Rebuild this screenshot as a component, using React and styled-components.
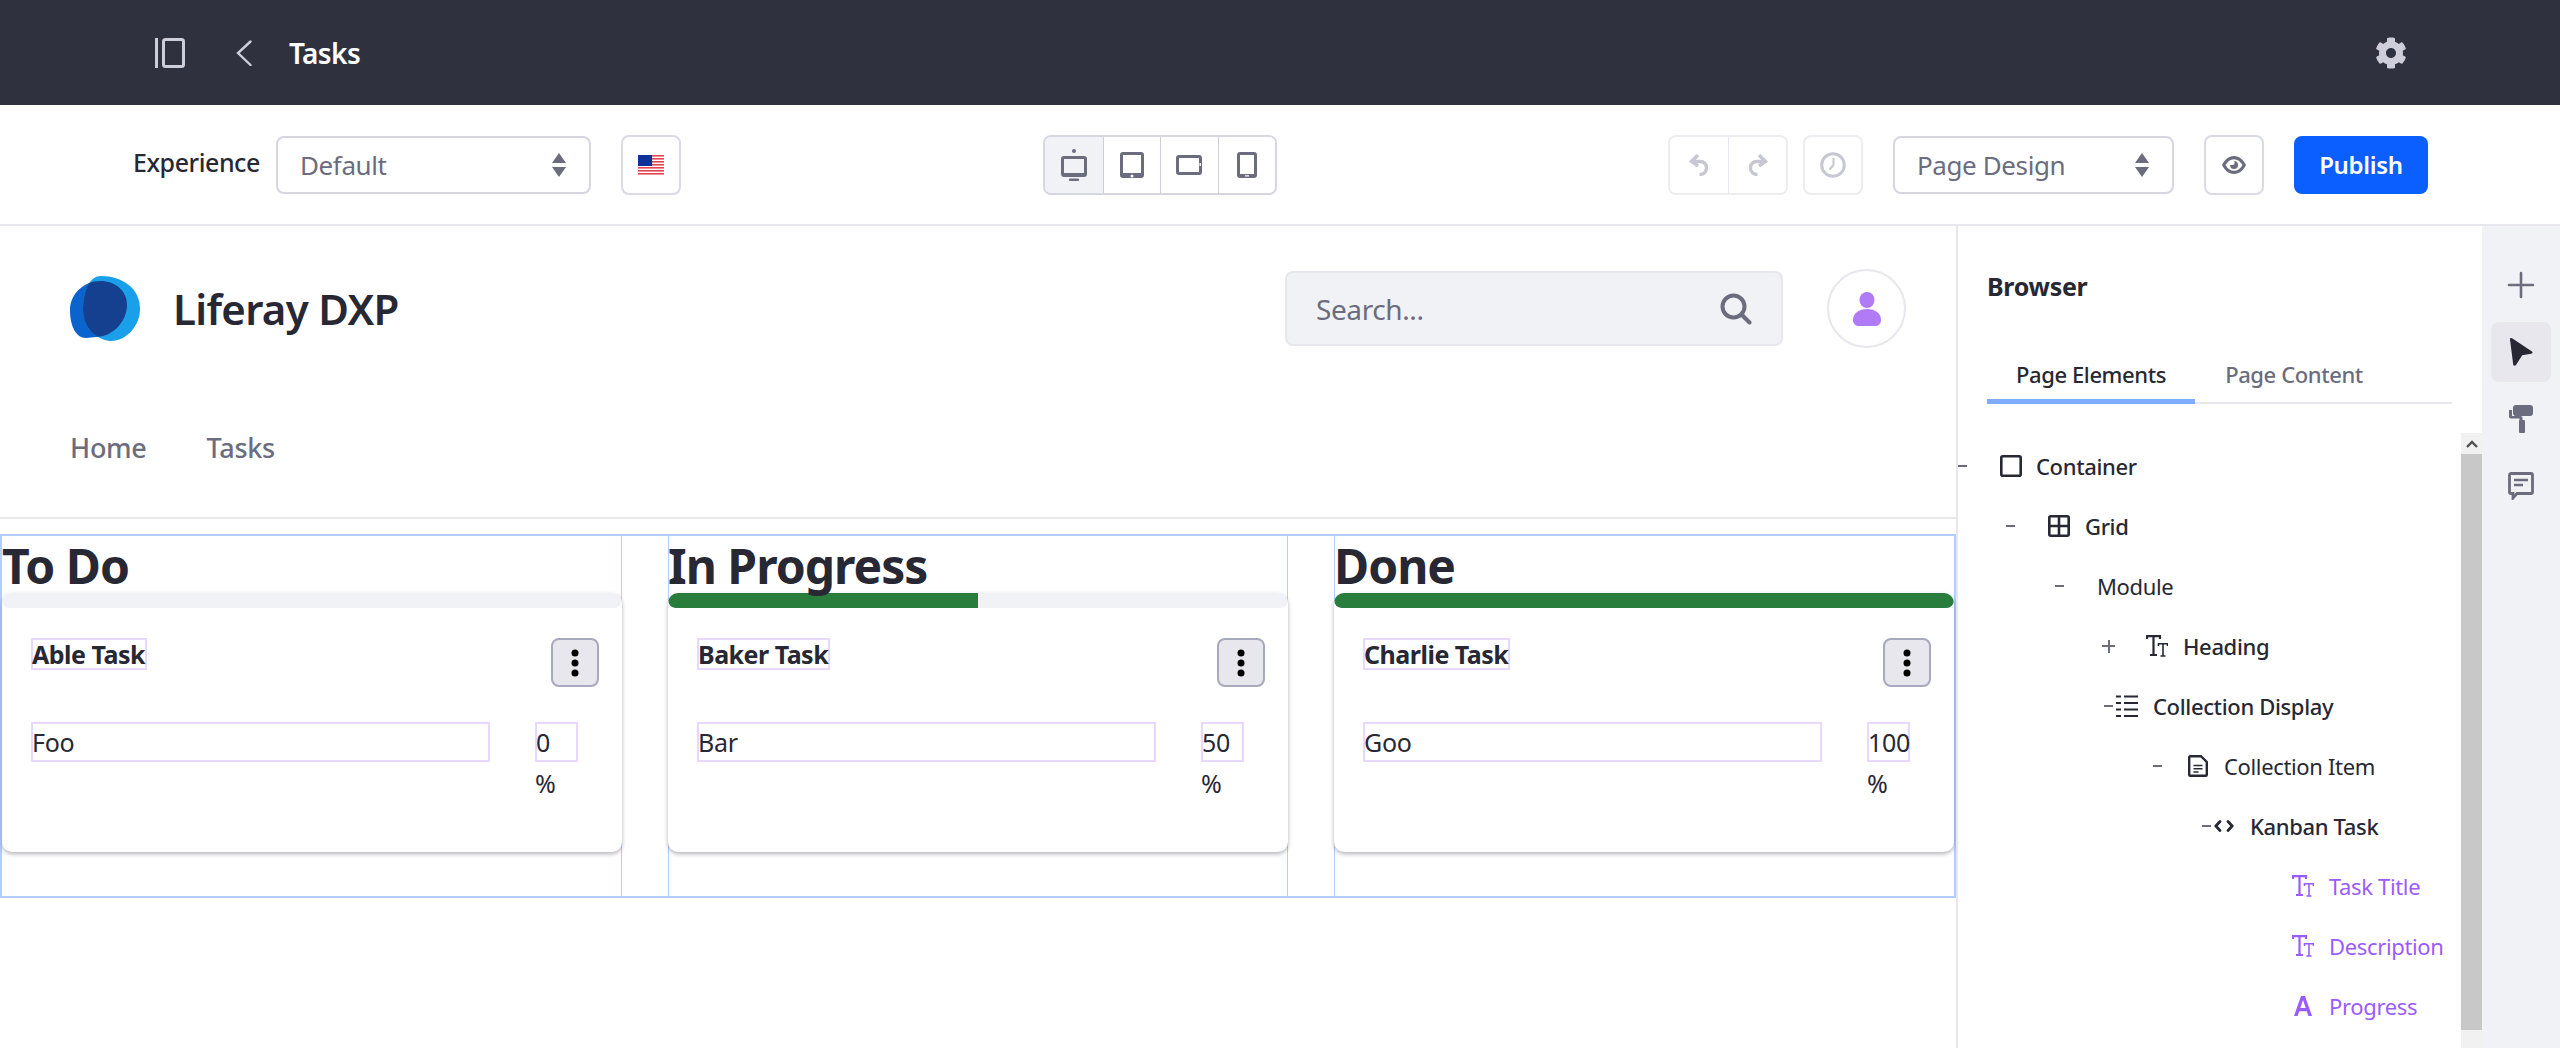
import React from "react";
import styled, { createGlobalStyle } from "styled-components";
import { FaCog } from "react-icons/fa";

const GlobalStyle = createGlobalStyle`
  html, body {
    margin: 0;
    background: #fff;
    overflow: hidden;
  }
  * { box-sizing: border-box; }
  body {
    font-family: "Noto Sans", "Open Sans", sans-serif;
    color: #272833;
  }
`;

const Page = styled.div`
  width: 2560px;
  height: 1048px;
  display: flex;
  flex-direction: column;
  overflow: hidden;
`;

const TopBar = styled.header`
  height: 105px;
  background: #30313f;
  display: flex;
  align-items: center;
  padding: 0 155px;
  color: #cdced9;
`;

const BackIcon = styled.svg`
  margin-left: 51px;
`;

const PageName = styled.div`
  margin-left: 37px;
  color: #fff;
  font-size: 28px;
  font-weight: 600;
  letter-spacing: -0.6px;
`;

const Settings = styled.div`
  margin-left: auto;
  margin-right: -2px;
  display: flex;
`;

const Toolbar = styled.div`
  height: 121px;
  flex: none;
  border-bottom: 2px solid #e7e7ed;
  display: flex;
  align-items: center;
  padding: 0 132px 0 133px;
`;

const ExperienceLabel = styled.span`
  width: 143px;
  flex: none;
  font-size: 25px;
  font-weight: 500;
  letter-spacing: -0.45px;
  margin-top: -5px;
`;

const SelectBox = styled.div`
  width: ${(props) => props.$width}px;
  height: 58px;
  margin-left: ${(props) => props.$left || 0}px;
  border: 2px solid #d5d6e0;
  border-radius: 8px;
  display: flex;
  align-items: center;
  justify-content: space-between;
  padding: 0 22px 0 22px;
  font-size: 26px;
  color: #6b6c7e;
  letter-spacing: -0.4px;
`;

const SquareButton = styled.div`
  width: 60px;
  height: 60px;
  border: 2px solid ${(props) => (props.$disabled ? "#ececf1" : "#d9dae3")};
  border-radius: 8px;
  background: #fff;
  display: flex;
  align-items: center;
  justify-content: center;
  margin-left: ${(props) => props.$left || 0}px;
  color: ${(props) => (props.$disabled ? "#c6c7d0" : "#6b6c7e")};
`;

const ButtonGroup = styled.div`
  display: flex;
  height: 60px;
  border: 2px solid ${(props) => (props.$disabled ? "#ececf1" : "#d5d6e0")};
  border-radius: 8px;
  overflow: hidden;
  margin-left: ${(props) => props.$left || "0"};
  color: ${(props) => (props.$disabled ? "#c6c7d0" : "#6b6c7e")};
`;

const GroupItem = styled.div`
  width: ${(props) => (props.$disabled ? 58 : 57.5)}px;
  display: flex;
  align-items: center;
  justify-content: center;
  background: ${(props) => (props.$active ? "#f1f2f5" : "#fff")};
  &:not(:first-child) {
    border-left: 1px solid ${(props) => (props.$disabled ? "#e7e7ed" : "#cdced9")};
  }
`;

const PublishButton = styled.div`
  width: 134px;
  height: 58px;
  margin-left: 30px;
  border-radius: 8px;
  background: #0b5fff;
  color: #fff;
  display: flex;
  align-items: center;
  justify-content: center;
  font-size: 24px;
  font-weight: 600;
  letter-spacing: -0.3px;
`;

const Main = styled.div`
  flex: 1;
  display: flex;
  min-height: 0;
`;

const Canvas = styled.main`
  width: 1956px;
  flex: none;
`;

const SiteHeader = styled.div`
  height: 293px;
  border-bottom: 2px solid #e7e7ed;
  padding: 43px 50px 0 70px;
`;

const BrandRow = styled.div`
  display: flex;
  align-items: center;
`;

const BrandName = styled.div`
  margin-left: 32px;
  font-size: 42px;
  font-weight: 600;
  letter-spacing: -0.7px;
`;

const SearchBox = styled.div`
  margin-left: auto;
  width: 498px;
  height: 75px;
  background: #f1f2f5;
  border: 2px solid #e7e7ed;
  border-radius: 8px;
  display: flex;
  align-items: center;
  justify-content: space-between;
  padding: 0 29px 0 29px;
  font-size: 28px;
  color: #6b6c7e;
  letter-spacing: -0.4px;
`;

const Avatar = styled.div`
  margin-left: 44px;
  width: 79px;
  height: 79px;
  border: 2px solid #e7e7ed;
  border-radius: 50%;
  display: flex;
  align-items: center;
  justify-content: center;
`;

const NavRow = styled.nav`
  display: flex;
  gap: 60px;
  margin-top: 81px;
  font-size: 27px;
  font-weight: 500;
  color: #6b6c7e;
  letter-spacing: -0.3px;
`;

const BoardGrid = styled.div`
  margin-top: 15px;
  height: 364px;
  border: 2px solid #b3cdff;
  display: grid;
  grid-template-columns: repeat(3, 1fr);
  gap: 46px;
`;

const Column = styled.section`
  box-shadow: ${(props) =>
    props.$last
      ? "inset 1px 0 0 #b3cdff"
      : props.$first
      ? "inset -1px 0 0 #b3cdff"
      : "inset 1px 0 0 #b3cdff, inset -1px 0 0 #b3cdff"};
`;

const ColumnTitle = styled.h1`
  margin: 0;
  height: 57px;
  font-size: 48px;
  line-height: 60px;
  font-weight: 700;
  letter-spacing: -1px;
  white-space: nowrap;
`;

const Card = styled.div`
  background: #fff;
  border-radius: 10px;
  height: 259px;
  box-shadow: 0 2px 4px rgba(39, 40, 51, 0.35);
  overflow: hidden;
`;

const ProgressTrack = styled.div`
  height: 15px;
  background: #f1f2f5;
  border-radius: 8px;
  overflow: hidden;
`;

const ProgressFill = styled.div`
  height: 100%;
  background: #287d3c;
  border-radius: 8px 0 0 8px;
`;

const CardBody = styled.div`
  padding: 30px 23px 0 29px;
`;

const CardTop = styled.div`
  display: flex;
  justify-content: space-between;
  align-items: flex-start;
  height: 49px;
`;

const Editable = styled.div`
  border: 2px solid #e8d8ff;
  height: 40px;
  font-size: 25px;
  line-height: 37px;
  letter-spacing: -0.3px;
  text-indent: -1px;
  width: ${(props) => (props.$width ? `${props.$width}px` : "auto")};
`;

const TaskTitle = styled(Editable)`
  height: 32px;
  line-height: 28px;
  font-size: 25px;
  font-weight: 700;
  letter-spacing: -0.5px;
  white-space: nowrap;
`;

const KebabButton = styled.div`
  width: 48px;
  height: 49px;
  background: #e7e7ed;
  border: 2px solid #a7a9bc;
  border-radius: 8px;
  display: flex;
  align-items: center;
  justify-content: center;
`;

const CardRow = styled.div`
  margin-top: 35px;
  display: flex;
  justify-content: space-between;
  align-items: flex-start;
  padding-right: 21px;
`;

const PercentCell = styled.div`
  font-size: 25px;
  line-height: 36px;
`;

const PercentSign = styled.div`
  margin-top: 3px;
`;

const BrowserPanel = styled.aside`
  flex: 1;
  border-left: 2px solid #e7e7ed;
  display: flex;
  flex-direction: column;
  min-width: 0;
`;

const PanelTitle = styled.div`
  height: 120px;
  padding: 42px 0 0 29px;
  font-size: 25px;
  line-height: 36px;
  font-weight: 700;
  letter-spacing: -0.3px;
`;

const Tabs = styled.div`
  margin: 0 30px 0 29px;
  height: 58px;
  flex: none;
  border-bottom: 2px solid #e7e7ed;
  display: flex;
`;

const Tab = styled.div`
  width: ${(props) => props.$width}px;
  height: 58px;
  padding-top: 13px;
  text-align: center;
  font-size: 22px;
  line-height: 30px;
  letter-spacing: -0.4px;
  font-weight: 500;
  color: ${(props) => (props.$active ? "#272833" : "#6b6c7e")};
  border-bottom: ${(props) => (props.$active ? "5px solid #80acff" : "none")};
`;

const TreeArea = styled.div`
  flex: 1;
  margin-top: 29px;
  display: flex;
  min-height: 0;
`;

const TreeList = styled.ul`
  list-style: none;
  margin: 0;
  padding: 3px 0 0;
  flex: 1;
`;

const TreeRow = styled.li`
  height: 60px;
  display: flex;
  align-items: center;
  padding-left: ${(props) => props.$indent}px;
  font-size: 22px;
  letter-spacing: -0.35px;
  color: ${(props) => (props.$purple ? "#9a5cff" : "#272833")};
  font-weight: ${(props) => (props.$strong ? 500 : 400)};
  white-space: nowrap;
`;

const Toggle = styled.span`
  width: ${(props) => (props.$plus ? 13 : 9)}px;
  height: 2px;
  background: #6b6c7e;
  margin-right: ${(props) => props.$gap}px;
  flex: none;
  position: relative;
  &::after {
    content: "";
    display: ${(props) => (props.$plus ? "block" : "none")};
    position: absolute;
    left: 5.5px;
    top: -5.5px;
    width: 2px;
    height: 13px;
    background: #6b6c7e;
  }
`;

const TreeIcon = styled.svg`
  flex: none;
  margin-right: ${(props) => props.$gap}px;
`;

const Scrollbar = styled.div`
  width: 21px;
  flex: none;
  background: #f1f1f1;
  display: flex;
  flex-direction: column;
`;

const ScrollArrow = styled.div`
  height: 21px;
  display: flex;
  align-items: center;
  justify-content: center;
`;

const ScrollThumb = styled.div`
  height: 576px;
  background: #c8c8c8;
`;

const Rail = styled.div`
  width: 78px;
  flex: none;
  background: #f1f2f5;
  padding: 29px 9px 0;
  display: flex;
  flex-direction: column;
  gap: 7px;
`;

const RailButton = styled.div`
  height: 60px;
  border-radius: 8px;
  background: ${(props) => (props.$active ? "#e7e7ed" : "transparent")};
  color: ${(props) => (props.$active ? "#272833" : "#6b6c7e")};
  display: flex;
  align-items: center;
  justify-content: center;
`;

const Carets = () => (
  <svg width="16" height="24" viewBox="0 0 16 24" fill="#6b6c7e">
    <path d="M8 0l7 10H1zM8 24L1 14h14z" />
  </svg>
);

const SidebarIcon = () => (
  <svg width="30" height="30" viewBox="0 0 30 30" fill="none" stroke="currentColor" strokeWidth="3">
    <path d="M1.5 0v30" />
    <rect x="8.5" y="1.5" width="20" height="27" rx="2" />
  </svg>
);

const Flag = () => (
  <svg width="26" height="20" viewBox="0 0 26 20">
    <rect width="26" height="20" fill="#fff" />
    {[0, 3, 6, 9, 12, 15, 18].map((y) => (
      <rect key={y} y={y} width="26" height="1.6" fill="#e2474e" />
    ))}
    <rect width="14" height="11" fill="#0a3299" />
  </svg>
);

const DesktopIcon = () => (
  <svg width="26" height="32" viewBox="0 0 26 32" fill="currentColor">
    <circle cx="13" cy="2" r="2" />
    <path fillRule="evenodd" d="M3 7h20a3 3 0 0 1 3 3v15a3 3 0 0 1-3 3H3a3 3 0 0 1-3-3V10a3 3 0 0 1 3-3zm0 3v14h20V10z" />
    <rect x="8" y="29.5" width="10" height="2.5" rx="1" />
  </svg>
);

const TabletIcon = () => (
  <svg width="24" height="26" viewBox="0 0 24 26" fill="currentColor">
    <path fillRule="evenodd" d="M3 0h18a3 3 0 0 1 3 3v20a3 3 0 0 1-3 3H3a3 3 0 0 1-3-3V3a3 3 0 0 1 3-3zm0 3v18h18V3zm9 19.5a1.5 1.5 0 1 0 0 3 1.5 1.5 0 0 0 0-3z" />
  </svg>
);

const LandscapeIcon = () => (
  <svg width="26" height="20" viewBox="0 0 26 20" fill="currentColor">
    <path fillRule="evenodd" d="M3 0h20a3 3 0 0 1 3 3v14a3 3 0 0 1-3 3H3a3 3 0 0 1-3-3V3a3 3 0 0 1 3-3zm0 3v14h20V3zM23.5 8v3h1.5V8z" />
  </svg>
);

const PhoneIcon = () => (
  <svg width="20" height="26" viewBox="0 0 20 26" fill="currentColor">
    <path fillRule="evenodd" d="M3 0h14a3 3 0 0 1 3 3v20a3 3 0 0 1-3 3H3a3 3 0 0 1-3-3V3a3 3 0 0 1 3-3zm0 3v19h14V3zM8 23.2v1.3h4v-1.3z" />
  </svg>
);

const UndoIcon = () => (
  <svg width="20" height="22" viewBox="0 0 20 22" fill="none" stroke="currentColor" strokeWidth="3.4">
    <path d="M9 1L2.5 7.5 9 12" />
    <path d="M3 7.5h8c4 0 6.5 2.5 6.5 6.5s-3 6.5-7 6.5" />
  </svg>
);

const RedoIcon = () => (
  <svg width="20" height="22" viewBox="0 0 20 22" fill="none" stroke="currentColor" strokeWidth="3.4">
    <path d="M11 1l6.5 6.5L11 12" />
    <path d="M17 7.5H9c-4 0-6.5 2.5-6.5 6.5s3 6.5 7 6.5" />
  </svg>
);

const ClockIcon = () => (
  <svg width="26" height="26" viewBox="0 0 26 26" fill="none" stroke="currentColor">
    <circle cx="13" cy="13" r="11.3" strokeWidth="3" />
    <path d="M13.5 6v7L9.5 17.5" strokeWidth="2" />
  </svg>
);

const EyeIcon = () => (
  <svg width="24" height="18" viewBox="0 0 24 18" fill="currentColor">
    <path fillRule="evenodd" d="M12 0c5.5 0 9.6 4 12 9-2.4 5-6.5 9-12 9S2.4 14 0 9c2.400-5 6.500-9 12-9zm0 3.200C8.500 3.200 5.500 5.500 3.500 9c2 3.500 5 5.800 8.500 5.800s6.500-2.300 8.500-5.800c-2-3.500-5-5.800-8.500-5.800z" />
    <path fillRule="evenodd" d="M12 5a4 4 0 1 1-4 4h3.200A2.500 2.500 0 0 0 12 5z" />
  </svg>
);

const Logo = () => (
  <svg width="71" height="65" viewBox="0 0 71 65">
    <defs>
      <clipPath id="logo-left">
        <path d="M0 34C0 18 14 5 30 5c16 0 27 10 27 24 0 17-15 32-31 32l-10 1C6 62 0 50 0 34z" />
      </clipPath>
    </defs>
    <path d="M0 34C0 18 14 5 30 5c16 0 27 10 27 24 0 17-15 32-31 32l-10 1C6 62 0 50 0 34z" fill="#0b63ce" />
    <path d="M31 0c21 0 39 12 39 33 0 17-14 32-29 32-9 0-28-9-28-31C13 18 18 0 31 0z" fill="#1aa0e8" />
    <path
      d="M31 0c21 0 39 12 39 33 0 17-14 32-29 32-9 0-28-9-28-31C13 18 18 0 31 0z"
      fill="#15408f"
      clipPath="url(#logo-left)"
    />
  </svg>
);

const SearchIcon = () => (
  <svg width="32" height="32" viewBox="0 0 32 32" fill="none" stroke="#6b6c7e" strokeWidth="4" strokeLinecap="round">
    <circle cx="13.500" cy="13.500" r="11" />
    <path d="M21.500 21.500L29.500 29.500" />
  </svg>
);

const PersonIcon = () => (
  <svg width="30" height="34" viewBox="0 0 30 34" fill="#b07bf5">
    <ellipse cx="15" cy="8" rx="7.500" ry="8" />
    <path d="M15 17c8 0 14 4 14 11 0 4-3 6-6 6H7c-3 0-6-2-6-6 0-7 6-11 14-11z" />
  </svg>
);

const KebabIcon = () => (
  <svg width="8" height="28" viewBox="0 0 8 28" fill="#000">
    <circle cx="4" cy="4" r="3.500" />
    <circle cx="4" cy="14" r="3.500" />
    <circle cx="4" cy="24" r="3.500" />
  </svg>
);

const IconContainer = ({ gap }) => (
  <TreeIcon $gap={gap} width="22" height="22" viewBox="0 0 22 22" fill="none" stroke="currentColor" strokeWidth="2.600">
    <rect x="1.300" y="1.300" width="19.400" height="19.400" rx="1.500" />
  </TreeIcon>
);

const IconGrid = ({ gap }) => (
  <TreeIcon $gap={gap} width="22" height="22" viewBox="0 0 22 22" fill="none" stroke="currentColor" strokeWidth="2.600">
    <rect x="1.300" y="1.300" width="19.400" height="19.400" rx="1.500" />
    <path d="M11 1v20M1 11h20" />
  </TreeIcon>
);

const IconFontSize = ({ gap }) => (
  <TreeIcon $gap={gap} width="22" height="22" viewBox="0 0 22 22" fill="none" stroke="currentColor">
    <path d="M1 4V1.200h13V4M7.500 1.200V19M4 20h7" strokeWidth="2.200" />
    <path d="M12.500 11V8.800h9V11M17 8.800V20.500M14.500 21h5" strokeWidth="1.600" />
  </TreeIcon>
);

const IconList = ({ gap }) => (
  <TreeIcon $gap={gap} width="22" height="22" viewBox="0 0 22 22" fill="none" stroke="currentColor" strokeWidth="2.200">
    <path d="M0 1.500h5M8 1.500h14M0 8h5M8 8h14M8 14.500h14M0 14.500h5M0 21h5M8 21h14" />
  </TreeIcon>
);

const IconDocument = ({ gap }) => (
  <TreeIcon $gap={gap} width="20" height="22" viewBox="0 0 20 22" fill="none" stroke="currentColor" strokeWidth="2.400">
    <path d="M1.200 2.200a1 1 0 0 1 1-1H13l5.800 5.800v12.800a1 1 0 0 1-1 1H2.200a1 1 0 0 1-1-1z" />
    <path d="M5.500 10.500h9M5.500 13.800h9M5.500 17h5" strokeWidth="1.500" />
  </TreeIcon>
);

const IconCode = ({ gap }) => (
  <TreeIcon $gap={gap} width="20" height="12" viewBox="0 0 20 12" fill="none" stroke="currentColor" strokeWidth="2.800" strokeLinecap="round" strokeLinejoin="round">
    <path d="M6 1.500L1.800 6 6 10.500M14 1.500L18.200 6 14 10.500" />
  </TreeIcon>
);

const IconLetter = ({ gap }) => (
  <TreeIcon $gap={gap} width="22" height="22" viewBox="0 0 22 22" fill="currentColor">
    <path d="M9 1h4l7 20h-3.600l-1.600-4.800H7.200L5.600 21H2zM8.300 13h5.400L11 5z" />
  </TreeIcon>
);

const columns = [
  { title: "To Do", task: "Able Task", description: "Foo", percent: 0 },
  { title: "In Progress", task: "Baker Task", description: "Bar", percent: 50 },
  { title: "Done", task: "Charlie Task", description: "Goo", percent: 100 },
];

export default function App() {
  return (
    <Page>
      <GlobalStyle />
      <TopBar>
        <SidebarIcon />
        <BackIcon width="16" height="26" viewBox="0 0 16 26" fill="none" stroke="currentColor" strokeWidth="2.400" strokeLinecap="round">
          <path d="M14.500 1.500L2 13l12.500 12" />
        </BackIcon>
        <PageName>Tasks</PageName>
        <Settings>
          <FaCog size={32} />
        </Settings>
      </TopBar>

      <Toolbar>
        <ExperienceLabel>Experience</ExperienceLabel>
        <SelectBox $width={315}>
          Default
          <Carets />
        </SelectBox>
        <SquareButton $left={30}>
          <Flag />
        </SquareButton>

        <ButtonGroup $left="362px">
          <GroupItem $active>
            <DesktopIcon />
          </GroupItem>
          <GroupItem>
            <TabletIcon />
          </GroupItem>
          <GroupItem>
            <LandscapeIcon />
          </GroupItem>
          <GroupItem>
            <PhoneIcon />
          </GroupItem>
        </ButtonGroup>

        <ButtonGroup $left="auto" $disabled>
          <GroupItem $disabled>
            <UndoIcon />
          </GroupItem>
          <GroupItem $disabled>
            <RedoIcon />
          </GroupItem>
        </ButtonGroup>
        <SquareButton $left={15} $disabled>
          <ClockIcon />
        </SquareButton>
        <SelectBox $width={281} $left={30}>
          Page Design
          <Carets />
        </SelectBox>
        <SquareButton $left={30}>
          <EyeIcon />
        </SquareButton>
        <PublishButton>Publish</PublishButton>
      </Toolbar>

      <Main>
        <Canvas>
          <SiteHeader>
            <BrandRow>
              <Logo />
              <BrandName>Liferay DXP</BrandName>
              <SearchBox>
                Search...
                <SearchIcon />
              </SearchBox>
              <Avatar>
                <PersonIcon />
              </Avatar>
            </BrandRow>
            <NavRow>
              <span>Home</span>
              <span>Tasks</span>
            </NavRow>
          </SiteHeader>

          <BoardGrid>
            {columns.map((col, i) => (
              <Column key={col.title} $first={i === 0} $last={i === 2}>
                <ColumnTitle>{col.title}</ColumnTitle>
                <Card>
                  <ProgressTrack>
                    <ProgressFill style={{ width: `${col.percent}%` }} />
                  </ProgressTrack>
                  <CardBody>
                    <CardTop>
                      <TaskTitle>{col.task}</TaskTitle>
                      <KebabButton>
                        <KebabIcon />
                      </KebabButton>
                    </CardTop>
                    <CardRow>
                      <Editable $width={459}>{col.description}</Editable>
                      <PercentCell>
                        <Editable $width={43}>{col.percent}</Editable>
                        <PercentSign>%</PercentSign>
                      </PercentCell>
                    </CardRow>
                  </CardBody>
                </Card>
              </Column>
            ))}
          </BoardGrid>
        </Canvas>

        <BrowserPanel>
          <PanelTitle>Browser</PanelTitle>
          <Tabs>
            <Tab $active $width={208}>
              Page Elements
            </Tab>
            <Tab $width={198}>Page Content</Tab>
          </Tabs>
          <TreeArea>
            <TreeList>
              <TreeRow $indent={0} $strong>
                <Toggle $gap={33} />
                <IconContainer gap={14} />
                Container
              </TreeRow>
              <TreeRow $indent={48} $strong>
                <Toggle $gap={33} />
                <IconGrid gap={15} />
                Grid
              </TreeRow>
              <TreeRow $indent={97}>
                <Toggle $gap={33} />
                Module
              </TreeRow>
              <TreeRow $indent={144} $strong>
                <Toggle $plus $gap={31} />
                <IconFontSize gap={15} />
                Heading
              </TreeRow>
              <TreeRow $indent={146} $strong>
                <Toggle $gap={3} />
                <IconList gap={15} />
                Collection Display
              </TreeRow>
              <TreeRow $indent={195}>
                <Toggle $gap={26} />
                <IconDocument gap={16} />
                Collection Item
              </TreeRow>
              <TreeRow $indent={244} $strong>
                <Toggle $gap={3} />
                <IconCode gap={16} />
                Kanban Task
              </TreeRow>
              <TreeRow $indent={334} $purple>
                <IconFontSize gap={15} />
                Task Title
              </TreeRow>
              <TreeRow $indent={334} $purple>
                <IconFontSize gap={15} />
                Description
              </TreeRow>
              <TreeRow $indent={334} $purple>
                <IconLetter gap={15} />
                Progress
              </TreeRow>
            </TreeList>
            <Scrollbar>
              <ScrollArrow>
                <svg width="12" height="8" viewBox="0 0 12 8" fill="none" stroke="#505050" strokeWidth="2.400">
                  <path d="M1 7l5-5 5 5" />
                </svg>
              </ScrollArrow>
              <ScrollThumb />
            </Scrollbar>
          </TreeArea>
        </BrowserPanel>

        <Rail>
          <RailButton>
            <svg width="28" height="28" viewBox="0 0 28 28" stroke="currentColor" strokeWidth="2.600" strokeLinecap="round">
              <path d="M14 2v24M2 14h24" />
            </svg>
          </RailButton>
          <RailButton $active>
            <svg width="24" height="28" viewBox="0 0 24 28" fill="currentColor">
              <path d="M2 0c.5 0 1 .2 1.500.5L23 13.500c1 .8.5 2-.8 2.200l-9 1.500L7 27c-.7 1.200-2.500 1-2.800-.4L1 1.500C.9.600 1.300 0 2 0z" />
            </svg>
          </RailButton>
          <RailButton>
            <svg width="24" height="28" viewBox="0 0 24 28" fill="currentColor">
              <rect x="4" y="0" width="20" height="11" rx="3" />
              <path d="M0 5h3v6h8.500a2 2 0 0 1 2 2v3h-3v-2.500H2a2 2 0 0 1-2-2z" />
              <rect x="10" y="15" width="6" height="13" rx="1" />
            </svg>
          </RailButton>
          <RailButton>
            <svg width="26" height="28" viewBox="0 0 26 28" fill="none" stroke="currentColor">
              <path d="M3 1.500h20a1.500 1.500 0 0 1 1.500 1.500v17a1.500 1.500 0 0 1-1.500 1.500H9L5 26v-4.500H3A1.500 1.500 0 0 1 1.500 20V3A1.500 1.500 0 0 1 3 1.500z" strokeWidth="2.800" />
              <path d="M6 8h14M6 13h9" strokeWidth="2.600" />
            </svg>
          </RailButton>
        </Rail>
      </Main>
    </Page>
  );
}
